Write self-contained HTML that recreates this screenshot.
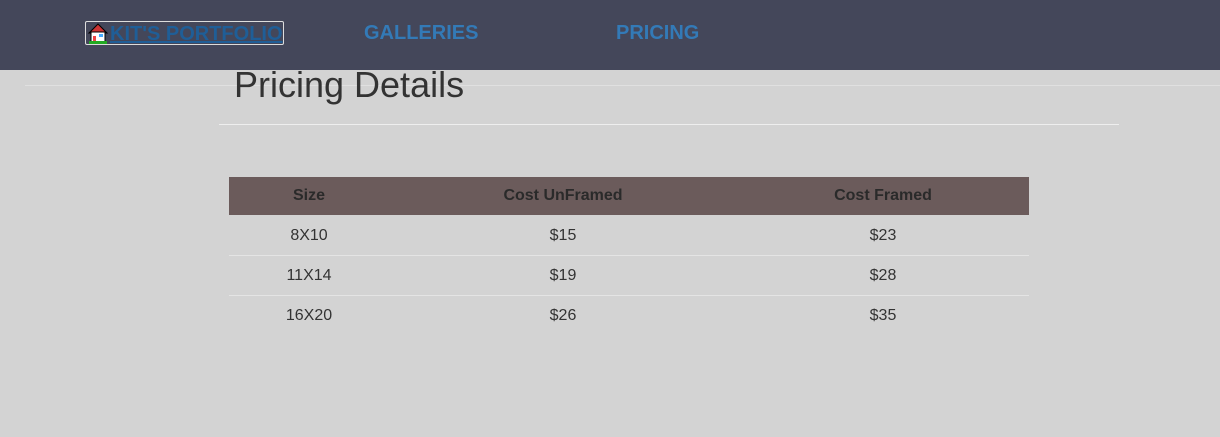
<!DOCTYPE html>
<html><head><style>
body{margin:0;width:1220px;height:437px;background:#d3d3d3;font-family:"Liberation Sans",sans-serif;position:relative;overflow:hidden}
.nav{position:absolute;left:0;top:0;width:1220px;height:70px;background:#44475a}
.logo{position:absolute;left:85px;top:21px;width:197px;height:22px;border:1px solid #ddd;border-radius:2px;}
.logo span{position:absolute;left:24px;top:1px;font-size:20px;font-weight:bold;color:#1f5e97;text-decoration:underline;white-space:nowrap}
.nav a{position:absolute;top:22px;font-size:20px;font-weight:bold;color:#337ab7;text-decoration:none}
h1{position:absolute;left:234px;top:64px;margin:0;font-weight:normal;font-size:36px;color:#333}
.l1{position:absolute;left:25px;top:85px;width:1195px;border-top:1px solid #e0e0e0}
.l2{position:absolute;left:219px;top:124px;width:900px;border-top:1px solid #eee}
table{position:absolute;left:229px;top:177px;width:800px;border-collapse:collapse;font-size:16px;color:#333}
th{background:#6b5b5b;height:38px;padding:0;font-weight:bold;color:#2a2a2a;box-sizing:border-box}
td{height:40px;padding:2px 0 0;text-align:center;border-top:1px solid #e4e4e4;box-sizing:border-box}
tr:nth-child(2) td{border-top:none}
</style></head><body>
<div class="nav">
<div class="logo"><svg width="22" height="22" style="position:absolute;left:1px;top:0" viewBox="0 0 22 22"><path d="M2 11 L11 2 L20 11 Z" fill="#c33" stroke="#000"/><rect x="4" y="10" width="14" height="10" fill="#fff" stroke="#000"/><rect x="6" y="14" width="3" height="6" fill="#e44"/><rect x="12" y="12" width="4" height="3" fill="#4af"/><rect x="2" y="19" width="18" height="3" fill="#2a2"/></svg><span>KIT'S PORTFOLIO</span></div>
<a style="left:364px">GALLERIES</a>
<a style="left:616px">PRICING</a>
</div>
<div class="l1"></div>
<h1>Pricing Details</h1>
<div class="l2"></div>
<table>
<tr><th style="width:160px">Size</th><th style="width:348px">Cost UnFramed</th><th>Cost Framed</th></tr>
<tr><td>8X10</td><td>$15</td><td>$23</td></tr>
<tr><td>11X14</td><td>$19</td><td>$28</td></tr>
<tr><td>16X20</td><td>$26</td><td>$35</td></tr>
</table>
</body></html>
